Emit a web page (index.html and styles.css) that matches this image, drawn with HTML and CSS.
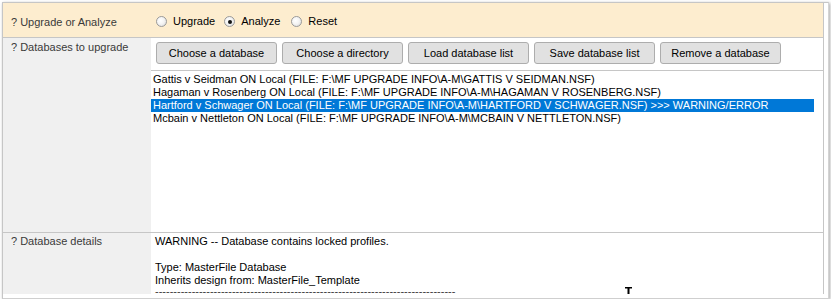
FILE: index.html
```html
<!DOCTYPE html>
<html lang="en">
<head>
    <meta charset="UTF-8">
    <title>Upgrade or Analyze</title>
    <link rel="stylesheet" href="styles.css">
</head>
<body>
    <div class="window">
        <div class="form">
            <div class="row row-mode">
                <div class="label">? Upgrade or Analyze</div>
                <div class="value radios">
                    <label class="radio"><span class="dot"></span>Upgrade</label>
                    <label class="radio checked"><span class="dot"></span>Analyze</label>
                    <label class="radio"><span class="dot"></span>Reset</label>
                </div>
            </div>
            <div class="row row-list">
                <div class="label">? Databases to upgrade</div>
                <div class="value">
                    <div class="buttons">
                        <button>Choose a database</button>
                        <button>Choose a directory</button>
                        <button>Load database list</button>
                        <button>Save database list</button>
                        <button>Remove a database</button>
                    </div>
                    <ul class="db-list">
                        <li>Gattis v Seidman ON Local (FILE: F:\MF UPGRADE INFO\A-M\GATTIS V SEIDMAN.NSF)</li>
                        <li>Hagaman v Rosenberg ON Local (FILE: F:\MF UPGRADE INFO\A-M\HAGAMAN V ROSENBERG.NSF)</li>
                        <li class="selected">Hartford v Schwager ON Local (FILE: F:\MF UPGRADE INFO\A-M\HARTFORD V SCHWAGER.NSF) &gt;&gt;&gt; WARNING/ERROR</li>
                        <li>Mcbain v Nettleton ON Local (FILE: F:\MF UPGRADE INFO\A-M\MCBAIN V NETTLETON.NSF)</li>
                    </ul>
                </div>
            </div>
            <div class="row row-details">
                <div class="label">? Database details</div>
                <div class="value details">
                    <div>WARNING -- Database contains locked profiles.</div>
                    <div>&nbsp;</div>
                    <div>Type: MasterFile Database</div>
                    <div>Inherits design from: MasterFile_Template</div>
                    <div class="dashes">----------------------------------------------------------------------------------</div>
                    <svg class="cursor" width="9" height="12" viewBox="0 0 9 12">
                        <path d="M1 0.5h7M4.5 0.5v11" stroke="#000" stroke-width="2" fill="none"/>
                    </svg>
                </div>
            </div>
        </div>
    </div>
</body>
</html>
```

FILE: styles.css
```css
body {
    margin: 0;
    background-color: #fff;
    font-family: "Liberation Sans", Arial, sans-serif;
    font-size: 11px;
    line-height: 13px;
    color: #000;
}

.window {
    margin: 2px 0 0 2px;
    width: 827px;
    height: 297px;
    box-sizing: border-box;
    border: 1px solid #c6c6c6;
    border-right-color: #d4d4d4;
    border-bottom-color: #cfcfcf;
    padding: 0 4px 4px 0;
    box-shadow: 1px 1px 3px rgba(0, 0, 0, 0.35);
}

.form {
    height: 291px;
    border-right: 1px solid #c6c6c6;
    overflow: hidden;
}

.row {
    display: grid;
    grid-template-columns: 148px 1fr;
    border-bottom: 1px solid #c6c6c6;
}

.label {
    background-color: #f0f0f0;
    color: #3a3a3a;
    padding-left: 8px;
}

.row-mode {
    height: 34px;
    background-color: #fdedcf;
}

.row-mode .label {
    background-color: transparent;
    padding-top: 13px;
}

.radios {
    display: flex;
    align-items: center;
    padding: 3px 0 0 5px;
}

.radio {
    display: flex;
    align-items: center;
    margin-right: 9px;
}

.radio:nth-child(2) {
    margin-right: 11px;
}

.radio .dot {
    width: 11px;
    height: 11px;
    box-sizing: border-box;
    border: 1px solid #9a9a9a;
    border-radius: 50%;
    background: radial-gradient(circle at 40% 40%, #ffffff 0%, #f4f4f4 45%, #d6d6d6 100%);
    margin-right: 6px;
    display: flex;
    align-items: center;
    justify-content: center;
}

.radio.checked .dot::after {
    content: "";
    width: 4px;
    height: 4px;
    border-radius: 50%;
    background-color: #111;
}

.row-list {
    height: 194px;
}

.row-list .label {
    padding-top: 3px;
}

.buttons {
    display: flex;
    gap: 5px;
    padding: 4px 0 0 5px;
}

.buttons button {
    width: 121px;
    height: 22px;
    padding: 0;
    font-family: inherit;
    font-size: 11px;
    color: #000;
    background-color: #e1e1e1;
    border: 1px solid #adadad;
    border-radius: 3px;
}

.db-list {
    list-style: none;
    margin: 6px 0 0;
    padding: 2px 0 0;
    border-top: 1px solid #c6c6c6;
}

.db-list li {
    padding-left: 2px;
    margin-right: 9px;
    white-space: nowrap;
}

.db-list li.selected {
    background-color: #0078d7;
    color: #fff;
}

.row-details {
    border-bottom: none;
    height: 61px;
}

.row-details .label {
    padding-top: 2px;
}

.details {
    position: relative;
    padding: 2px 0 0 4px;
}

.dashes {
    line-height: 9px;
    color: #3a3a3a;
    letter-spacing: 0;
}

.cursor {
    position: absolute;
    left: 473px;
    top: 54px;
}
```
